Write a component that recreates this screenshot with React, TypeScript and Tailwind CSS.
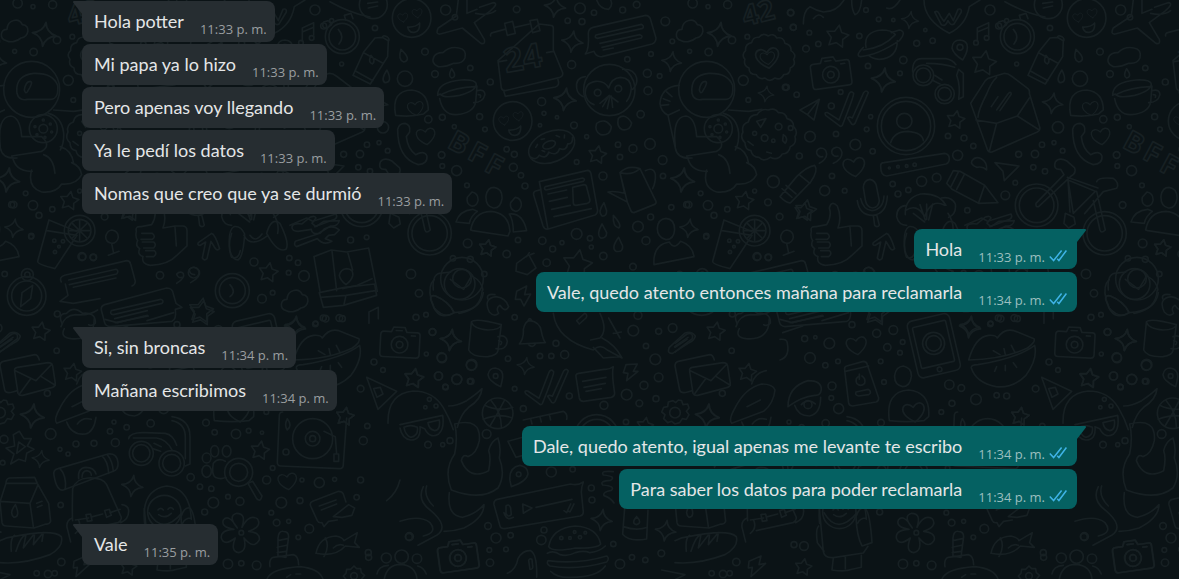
import { clsx } from 'clsx'

type Message = { text: string; time: string }
type Group = { from: 'them' | 'me'; messages: Message[] }

const GROUPS: Group[] = [
  {
    from: 'them',
    messages: [
      { text: 'Hola potter', time: '11:33 p. m.' },
      { text: 'Mi papa ya lo hizo', time: '11:33 p. m.' },
      { text: 'Pero apenas voy llegando', time: '11:33 p. m.' },
      { text: 'Ya le pedí los datos', time: '11:33 p. m.' },
      { text: 'Nomas que creo que ya se durmió', time: '11:33 p. m.' },
    ],
  },
  {
    from: 'me',
    messages: [
      { text: 'Hola', time: '11:33 p. m.' },
      { text: 'Vale, quedo atento entonces mañana para reclamarla', time: '11:34 p. m.' },
    ],
  },
  {
    from: 'them',
    messages: [
      { text: 'Si, sin broncas', time: '11:34 p. m.' },
      { text: 'Mañana escribimos', time: '11:34 p. m.' },
    ],
  },
  {
    from: 'me',
    messages: [
      { text: 'Dale, quedo atento, igual apenas me levante te escribo', time: '11:34 p. m.' },
      { text: 'Para saber los datos para poder reclamarla', time: '11:34 p. m.' },
    ],
  },
  { from: 'them', messages: [{ text: 'Vale', time: '11:35 p. m.' }] },
]

export default function App() {
  return (
    <main className="relative min-h-screen overflow-hidden bg-[#0b1316] font-['Open_Sans','Noto_Sans',sans-serif]">
      <Wallpaper />
      <div className="relative flex flex-col gap-[15px] pt-px pr-[102px] pb-3 pl-[82px]">
        {GROUPS.map((group, i) => (
          <ul key={i} className={clsx('flex flex-col', group.from === 'me' ? 'items-end gap-[3px]' : 'items-start gap-0.5')}>
            {group.messages.map((m, j) => (
              <Bubble key={j} message={m} mine={group.from === 'me'} first={j === 0} />
            ))}
          </ul>
        ))}
      </div>
    </main>
  )
}

function Bubble({ message, mine, first }: { message: Message; mine: boolean; first: boolean }) {
  return (
    <li
      className={clsx(
        'relative flex rounded-lg pt-2',
        mine ? 'bg-[#056162] pr-2.5 pb-2 pl-[11px]' : 'bg-[#262d31] pr-2 pb-[9px] pl-3',
        first && (mine ? 'rounded-tr-none' : 'rounded-tl-none'),
      )}
    >
      {first && <Tail mine={mine} />}
      <span className="font-['Lato','Open_Sans',sans-serif] text-[18px] leading-6 text-[#e4e6e7]">{message.text}</span>
      <span className={clsx('ml-4 flex items-center self-end text-[13px] leading-4 whitespace-nowrap', mine ? 'text-[#9bbfbf]' : 'text-[#9a9ea0]')}>
        <time className="relative top-1">{message.time}</time>
        {mine && <Ticks />}
      </span>
    </li>
  )
}

function Tail({ mine }: { mine: boolean }) {
  return mine ? (
    <svg className="absolute top-0 left-full" width="9" height="14" viewBox="0 0 9 14" aria-hidden="true">
      <path d="M0 0h8q1.6.4.7 1.8L0 13z" fill="#056162" />
    </svg>
  ) : (
    <svg className="absolute top-0 right-full" width="9" height="14" viewBox="0 0 9 14" aria-hidden="true">
      <path d="M9 0H1Q-.6.4.3 1.8L9 13z" fill="#262d31" />
    </svg>
  )
}

function Ticks() {
  return (
    <svg className="relative top-[3px] ml-1" width="18" height="14" viewBox="0 0 18 14" fill="none" stroke="#3fb3e6" strokeWidth="1.5" role="img" aria-label="Leído">
      <path d="M.8 7.5 4.6 11.5 12.6 1.5M8.2 9.8l1.7 1.7L17.4 1.5" />
    </svg>
  )
}

/* ---------- wallpaper ---------- */

type Point = [number, number]
type Round = [number, number, number]

function Stars({ at }: { at: Round[] }) {
  return at.map(([x, y, r], i) => {
    const pts = Array.from({ length: 10 }, (_, k) => {
      const a = (k * Math.PI) / 5 - 1.4
      const d = k % 2 ? r * 0.52 : r
      return `${(x + Math.cos(a) * d).toFixed(1)},${(y + Math.sin(a) * d).toFixed(1)}`
    })
    return <polygon key={i} points={pts.join(' ')} />
  })
}

function Sparkles({ at }: { at: Round[] }) {
  return at.map(([x, y, r], i) => (
    <path key={i} transform={`translate(${x} ${y}) rotate(8) scale(${r / 30})`} d="M0-30Q4-6 30 0 4 6 0 30-4 6-30 0-4-6 0-30z" />
  ))
}

function Dots({ at }: { at: Round[] }) {
  return at.map(([x, y, r], i) => <circle key={i} cx={x} cy={y} r={r} />)
}

function Hearts({ at }: { at: Round[] }) {
  return at.map(([x, y, r], i) => (
    <path key={i} transform={`translate(${x} ${y}) rotate(-8) scale(${r / 30})`} d="M0 28C-60-8-22-46 0-16 22-46 60-8 0 28z" />
  ))
}

function Clouds({ at }: { at: Point[] }) {
  return at.map(([x, y], i) => (
    <path key={i} transform={`translate(${x} ${y})`} d="M-24 28c-22-6-18-34 2-34 2-30 36-36 46-14 26 2 20 36-4 40-14 12-32 14-44 8z" />
  ))
}

function Camera({ x, y, r = 0 }: { x: number; y: number; r?: number }) {
  return (
    <g transform={`translate(${x} ${y}) rotate(${r})`}>
      <path d="M-48-34h22l6-14h34l6 14h32q8 0 8 8v58q0 10-10 10h-98q-10 0-10-10v-56q0-10 10-10zM-12-38h18M34-24h12" />
      <circle cx="0" cy="4" r="25" />
      <circle cx="0" cy="4" r="10" />
    </g>
  )
}

function HeartFace({ x, y }: { x: number; y: number }) {
  return (
    <g>
      <circle cx={x} cy={y} r="58" />
      <Hearts at={[[x - 26, y - 1, 14], [x + 17, y - 14, 14]]} />
      <path d={`M${x - 12} ${y + 27}q22 2 36-12 2 26-16 28-16 2-20-16z`} />
    </g>
  )
}

function Checks({ x, y }: { x: number; y: number }) {
  return (
    <path
      transform={`translate(${x} ${y})`}
      d="M2 76q-6-10 6-8l34 22L72 12q6-12 14-2 2 6-34 96-4 6-10 0zM68 84q4-6 14 0l34-76q8-10 14 0l-40 92q-4 6-10 2z"
    />
  )
}

// One tile of the pattern. Shapes are drawn on a canvas three times finer than
// the page, split in the blocks that make up the tile.
function Tile() {
  return (
    <g id="tile">
      <g transform="translate(400 0) scale(.3333)">
        {/* calendar */}
        <path d="M272 108q-2-8 6-10l36-10M344 82l44-10M418 72l34 4q8 0 8 8l0 66 28 68q2 10-8 14l-164 40q-10 0-12-8l-10-82zM314 70l24-6 8 36-24 6zM390 62l22-4 8 34-22 6zM298 185l22-4M440 158l20-4M312 275l4 14 150-28q14-4 8-22" />
        <text x="318" y="218" fontSize="100" transform="rotate(-10 318 218)" fontWeight="700">24</text>
        {/* speech card */}
        <path d="M565 100q0-14 14-18l158-36q10 0 14 10l17 58q0 14-12 18L606 170q-18 2-24-16l-26 8q12-14 9-62zM588 105l136-32q10 6 4 12l-136 30q-10-2-4-10zM600 130l120-26q10 4 4 10l-118 28M610 150l30-6" />
        <text x="1035" y="78" fontSize="84" transform="rotate(-14 1035 78)" fontWeight="700">42</text>
        {/* seal */}
        <path d="M1105 108q16-10 26 6 20-4 24 16 20 4 18 22 18 12 8 26 8 18-10 26 0 20-20 20-8 18-26 10-16 14-30 0-18 6-26-10-22 0-22-20-18-8-12-26-12-14 2-26-2-20 18-24 4-18 22-16 12-16 28-4z" />
        <Hearts at={[[1103, 175, 20], [1103, 175, 32]]} />
        {/* monkey */}
        <circle cx="628" cy="270" r="77" />
        <path d="M556 230q-30 4-26 34 2 18 20 26M668 208q34-2 42 26 4 18-12 34M556 282q-2-34 32-38 26-2 38 20 8-30 36-32 30 2 32 32-2 26-14 40M556 282q4 26 26 32M600 310l28-24 26 20M608 320l16-28M622 326l8-38M638 322l-4-34M590 370q26-18 44 10-2 28-32 24-20-10-12-34zM655 355q20-18 40 14-4 24-28 20-18-8-12-34z" />
        <Dots at={[[593, 278, 10], [655, 266, 10]]} />
        <HeartFace x={338} y={363} />
        {/* donut */}
        <g transform="rotate(-22 455 440)">
          <ellipse cx="455" cy="440" rx="72" ry="46" />
          <ellipse cx="450" cy="432" rx="20" ry="11" />
          <path d="M385 446q12 16 26 4 14 20 30 2 18 22 34 2 16 16 28-4 14 8 20-12M410 424l8-6M434 408l10 2M480 414l8 8M500 430l4-8M424 440l6 6" />
        </g>
        {/* newspaper */}
        <path d="M418 545l145-34q8 0 10 10l20 110q0 10-8 14l-140 42q-12 2-16-10l-28-92q-2-10 6-12l16-4zM418 545l26 142M436 560l112-26q10 4 2 10l-112 26q-8-4-2-10zM444 582l56-12M448 604l54-12M455 628l56-12M462 650l112-24M518 562l34-8q8 0 8 8l10 38q0 8-8 10l-34 6q-8 0-8-8z" />
        {/* watering can */}
        <path d="M660 518q22-24 60-12l48 98q2 8-6 10l-60 24q-8 0-10-8l-10-24-58-30q18-4 50 4zM660 518l22 88M660 518q34 10 60-12M736 512q24-12 30 10 2 24-8 44" />
        {/* astronaut */}
        <circle cx="920" cy="268" r="84" />
        <path d="M876 280q-6-54 50-60 58-2 72 36 4 40-20 42h-70q-26 6-32-18zM898 270q4-26 18-26 10 2-8 30-6 10-10-4zM838 256q-54 4-58 54 2 24 24 36l34-16M790 296l20 8M784 316l22-2M800 276l16 14M804 346l22 98q6 34 50 30M826 440q-10-90 32-92 28 4 32 62h60q30 26 0 44l-90 14M862 468q8 48 60 46M920 510q-14 52 30 66 44 4 60-24 44 4 60-28-4-26-30-36M986 330l60 4 40-6M970 340q40 10 46 58 2 30-10 52M956 464q30 10 34 56M1006 440q34 10 40 50" />
        <circle cx="955" cy="386" r="42" />
        <circle cx="955" cy="386" r="13" />
        <Dots at={[[955, 360, 3], [976, 372, 3], [980, 396, 3], [960, 412, 3], [936, 404, 3], [930, 380, 3]]} />
        {/* cookie */}
        <path d="M1105 330q20-8 30 8 22-2 26 18 20 4 20 24 14 14 4 30 6 22-14 30-4 22-24 22-14 22-36 10-20 16-34 0-20 0-24-20-18-4-18-24-16-14-6-32-6-22 16-30 4-22 26-22 14-20 34-14zM1070 364l28-8-16 26zM1044 424l16 12M1100 456l14 4M1150 404q16 10 6 26l-8-8z" />
        <Dots at={[[1136, 380, 10], [1094, 414, 10], [1120, 422, 5], [1064, 400, 6], [1172, 384, 7]]} />
        {/* drops */}
        <path d="M612 608q-20 28-6 40 14 2 14-16zM640 646q-2 34 16 38 12-8-16-38zM606 672q-18 32-4 42 18 2 18-16zM656 712q-24 32-8 42 22 4 20-16z" />
        {/* drink with lemon slice */}
        <path d="M972 660l82 34M972 660l-34 124q0 10 52 22l66-100-90-14" />
        <circle cx="1064" cy="692" r="46" />
        <circle cx="1064" cy="692" r="34" />
        <path d="M1064 660v64M1034 692h62M1042 670l44 44M1086 670l-44 44" />
        <Dots at={[[988, 722, 5], [1014, 724, 5], [1002, 740, 4], [990, 756, 5]]} />
        {/* people */}
        <path d="M798 655q26 2 26 34-2 30-26 30-26-6-26-34 2-28 26-30zM762 794q-4-60 46-68 14 26 34-2 36 12 40 46zM282 562q26 4 24 34-4 30-26 28-24-6-22-36 4-26 24-26zM212 690q10-54 60-56 54 4 58 60l-6 14-106-16zM216 576q20 4 18 26-4 18-20 16-16-6-12-26zM346 592q18 2 18 24-4 18-18 18-18-6-14-26zM168 666q10-34 50-38l14 6q-20 14-24 36zM328 642q40-4 52 50l-40 4q0-36-12-54zM350 790l36-26 22 40-26 20-34-10zM380 770l8-12M392 764l10-4" />
        <Stars at={[[592, 465, 28], [1033, 603, 29], [262, 745, 26], [532, 795, 46]]} />
        <Sparkles at={[[465, 20, 32], [517, 125, 32], [495, 298, 34], [815, 185, 30], [958, 103, 36], [1098, 282, 24], [848, 540, 36], [867, 685, 28]]} />
        <Clouds at={[[868, 94]]} />
        <path d="M590 0q10 28 36 28 14-12 6-28" />
        <Dots at={[
          [350, 28, 10], [540, 25, 16], [582, 38, 8], [503, 62, 8], [546, 65, 9], [668, 30, 9], [710, 14, 10], [796, 64, 13], [878, 10, 14], [924, 20, 6], [983, 14, 12],
          [996, 120, 11], [1042, 110, 7], [926, 156, 11], [869, 154, 6], [817, 124, 7], [682, 178, 8], [753, 162, 7], [515, 194, 12], [742, 220, 12], [779, 228, 7], [744, 272, 12],
          [425, 305, 12], [432, 340, 6], [471, 352, 5], [722, 343, 11], [522, 376, 10], [420, 376, 5], [560, 410, 6], [654, 434, 8], [699, 446, 12], [750, 432, 16], [660, 471, 8],
          [530, 486, 7], [609, 528, 12], [788, 480, 13], [789, 528, 8], [814, 622, 8], [866, 614, 10], [924, 616, 14], [982, 628, 8], [942, 646, 9], [902, 580, 7], [752, 651, 9],
          [714, 680, 16], [530, 702, 16], [570, 715, 8], [574, 741, 6], [738, 722, 12], [486, 728, 6], [458, 747, 9], [427, 722, 11], [918, 710, 7], [610, 768, 11], [699, 800, 10],
          [440, 788, 11], [354, 720, 8], [320, 762, 11], [1030, 241, 15], [1045, 300, 7], [1159, 262, 9], [1120, 545, 18], [1104, 607, 10], [1064, 573, 6], [1180, 82, 9], [1172, 38, 10],
          [1139, 650, 10], [1072, 770, 10], [1105, 772, 9], [320, 448, 8], [343, 463, 9], [340, 502, 12], [363, 526, 8], [375, 558, 9], [1140, 88, 5],
        ]} />
      </g>

      <g transform="translate(105 0) scale(.3333)">
        <path d="M70 72q0-40 20-52 20 12 40 16 40 0 62-36M100 56q16-20 30-4M215 0q0 30 10 44 16-4 20-44M320 24q20 8 40-24M432 0q0 60 76 100 50-24 60-80L600 0" />
        <path d="M464 36q10-8 18 14l10 14 16-24 12 22 14-34q12-4 10 8l-22 36q-10 6-18-10-8 20-20 12z" />
        {/* saturn */}
        <path d="M258 142q-8-48 48-52 28 0 40 14M352 122q0 52-54 56-22-2-32-12M250 142q-26 26-8 28 50-4 116-48 24-28 0-32l-24 8M250 150q60-6 96-46" />
        {/* music, pin */}
        <path d="M592 124V84l34-16v42M592 96l34-14M540 120q24 2 22 24 0 14-14 36-28-18-32-36 2-24 24-24zM675 5q60 34 120 46" />
        <Dots at={[[588, 128, 7], [620, 114, 7], [540, 142, 9]]} />
        {/* stopwatch */}
        <circle cx="712" cy="110" r="51" />
        <circle cx="712" cy="110" r="40" />
        <path d="M700 88q20 22 2 44M722 60l-4-14 20-6 6 16M656 66l14-4 10 12-16 12q-16-4-8-20z" />
        <circle cx="805" cy="14" r="42" />
        <path d="M788 10l30-4M790 24l28-6" />
        {/* bottle */}
        <path d="M832 112l18 10-2 48-52 82-52-26 32-70 34-42zM776 158l58 32M750 212l54 30M798 166q16 18 4 26-14-4-4-26zM832 112q2-8 14-2 10 8 4 14" />
        <HeartFace x={920} y={54} />
        {/* plane */}
        <path d="M1060 0l-6 48-54 36q-10 20 6 18l66-18 56 46q14 4 10-12l-30-50 46-34q30-24 10-26l-40 14M1086 0v40l30-12M1112 40q40 8 60-8" />
        <Camera x={152} y={220} r={-8} />
        {/* glasses */}
        <path d="M398 216q-2-42 30-40h70q20 4 30 18M440 190q50 0 84 12M536 208l14 12v70l-14 8q6-40-6-72zM456 240l24 12M464 226l22 14" />
        <circle cx="430" cy="226" r="31" />
        <circle cx="430" cy="226" r="22" />
        <circle cx="494" cy="282" r="29" />
        <circle cx="494" cy="282" r="20" />
        <path d="M60 330l58-32-16 62-20-16zM82 344l36-46" />
        <Checks x={135} y={270} />
        {/* contact */}
        <circle cx="378" cy="378" r="86" />
        <circle cx="378" cy="378" r="74" />
        <circle cx="373" cy="363" r="23" />
        <path d="M332 428q10-34 52-34 44 4 46 28" />
        {/* open letter */}
        <path d="M572 310l44-68q6-8 18-10l40-12q10 0 20 8l50 38q6 6 4 14l32 104q0 8-8 12l-136 60q-10 2-14-8zM588 360l62 10 62-22 36-54M650 370l-22 84M712 348l66 42M594 352q0-20 26-70 14-36 30-50M634 320l20-30M650 330l34-48q8-10 10 0l-34 50" />
        {/* person with heart */}
        <circle cx="900" cy="236" r="23" />
        <path d="M872 346q-14-74 48-76 50 6 50 60l-14 12q-40 10-84 4z" />
        <Hearts at={[[932, 326, 22], [963, 410, 26], [223, 502, 30]]} />
        {/* coffee cup */}
        <path d="M998 286q0-40 70-46 44-2 46 12 0 20-50 34-50 10-58-4zM1004 296q10 50 50 48 50-4 58-36l4-50M1116 272q24-6 24 12-6 24-34 24M1120 284q10 0 6 8M1012 282q40-20 98-22" />
        <path d="M878 388q4-18 22-18 18 4 14 26l-10 14q4 36 28 54 26-14 34 4 2 24-26 26-62-18-62-106z" />
        <g fontSize="84" fontWeight="700">
          <text x="1024" y="440" transform="rotate(28 1024 440)">B</text>
          <text x="1084" y="474" transform="rotate(28 1084 474)">F</text>
          <text x="1134" y="510" transform="rotate(28 1134 510)">F</text>
        </g>
        {/* quotes */}
        <path d="M118 490q22-12 22-28-2-18-18-18-14 4-12 16 6 14 18 10M160 490q26-12 26-32-4-18-18-16-16 4-12 18 6 12 18 8M576 482q10-14 28-6 18 10 16 34-12-12-30-8-20-8-14-20z" />
        <path d="M302 498q0-10 10-10l182-28q14 2 14 16 0 12-10 16L320 528q-18 0-18-30z" />
        <Dots at={[[328, 504, 3], [354, 500, 4], [380, 498, 4], [404, 494, 5]]} />
        <path d="M645 488l72 10-44 44-4-28z" />
        {/* crayons */}
        <path d="M500 550l20-38 20 2 74 42 40 52-58 2-80-42zM536 514l-24 48M554 522l-24 46M614 556l-18 52M104 496q12 16-12 50l-60 62q-10 4-32-18l50-60q30-30 54-34zM60 526l30 24M6 566l30 26M18 556l30 26" />
        {/* bicycle */}
        <circle cx="770" cy="616" r="64" />
        <circle cx="770" cy="616" r="52" />
        <circle cx="974" cy="700" r="65" />
        <circle cx="974" cy="700" r="53" />
        <path d="M768 610l84-86-10-16q-24 2-16-22 12-16 36-2l22 20q6 14-10 24l-98 92q-10 2-8-10zM864 540l82 34-66 66zM864 540l6 96M950 574l26 116q-12 12-16 0l-20-88M950 545q4-14 50-10 20 14 10 30l-40 10-56 66M856 640l26 12 4 20-20 12-14-14zM862 532l92 32" />
        {/* microphone */}
        <path d="M250 562q2-22 20-24 18 4 20 24l8 40q-2 20-20 22-18-2-22-24zM232 602q6 44 46 44 42-4 44-58M242 596q8 34 34 36 34-4 36-44M280 646l4 30q8 8 14 0l-8-32" />
        {/* second monkey */}
        <path d="M376 644q-2-50 46-62 54-4 76 34M380 616q-30 2-30 34 6 26 30 26M484 594q30-6 42 18 4 30-20 40M376 632q34-24 58 18 20-56 60-34M420 614l16 46M440 612v46M458 612l-12 48M400 640l34 26M380 700q-14 40 0 72 20 8 26-20M504 640q20 30 14 60" />
        {/* thumb up */}
        <path d="M94 694q-4-16 14-14l32-6q16-26 8-50 6-24 24-6 14 34 2 66l36-6h22q14 0 14 14v46l-28 26q-30 32-82 32-28-4-22-26-18-6-10-24-14-8-6-24-8-10-4-28zM210 682l4 56M110 700h32q12 10 0 18h-34M112 726h34q10 8 0 18h-30M122 752h26q10 8-2 18h-22" />
        <path d="M280 728l40-28q10 2 24 46-8 8-14-2l-12-20-12 52q-8 8-14-2l10-48-16 10q-10 0-6-8zM555 676l50-22 18 10 70-22q6 10-4 16l-60 22" />
        <path d="M20 690q20 2 20 22-4 18-20 18-18-4-18-20 4-18 18-20zM20 730l6 30M10 766l32-12" />
        {/* dog */}
        <circle cx="1064" cy="852" r="46" />
        <path d="M985 870q-4-44 18-50l34-4M1036 838l40 30 24-40M1104 830q26 14 30 40" />
        <Stars at={[[172, 110, 35], [612, 190, 38], [527, 360, 28], [77, 632, 33], [1147, 745, 26]]} />
        <Sparkles at={[[390, 60, 26], [310, 240, 36], [818, 310, 31]]} />
        <path d="M1000 200q-24-10-12-32 10-12 26-10 20-20 48-14 24 4 18 30-8 18-34 16-24 12-46 10z" />
        <path d="M888 148q-10 32 8 38 26-6-8-38zM846 210q-20 30-6 38 24 0 6-38zM1040 206q-12 22 0 28 18-4 0-28z" />
        <Dots at={[
          [32, 38, 9], [78, 146, 10], [115, 132, 8], [238, 108, 8], [88, 98, 7], [40, 82, 9], [16, 262, 9], [50, 284, 8], [258, 30, 7], [296, 58, 7], [340, 60, 5], [410, 130, 9],
          [458, 122, 8], [436, 90, 5], [630, 30, 15], [680, 62, 6], [370, 180, 11], [360, 220, 7], [264, 198, 8], [710, 192, 6], [656, 78, 9], [182, 276, 7], [154, 318, 9], [272, 350, 6],
          [260, 388, 7], [168, 402, 8], [90, 410, 16], [226, 434, 16], [278, 454, 8], [58, 468, 9], [552, 414, 9], [504, 408, 8], [580, 438, 8], [834, 382, 17], [786, 434, 8], [716, 463, 9],
          [765, 462, 11], [822, 428, 6], [848, 452, 7], [533, 466, 15], [760, 502, 8], [795, 514, 8], [706, 548, 7], [676, 586, 13], [470, 533, 13], [425, 544, 15], [385, 570, 8], [354, 582, 9],
          [338, 552, 8], [134, 572, 15], [194, 572, 7], [156, 528, 8], [562, 631, 8], [1028, 615, 10], [1022, 30, 15], [960, 155, 10], [990, 222, 10], [1096, 204, 8], [1156, 246, 9], [970, 358, 11],
          [1012, 352, 9], [1124, 350, 9], [1140, 388, 7], [1010, 465, 10], [1012, 498, 7], [1055, 512, 15], [1086, 556, 7], [1088, 730, 13], [1044, 775, 8], [1096, 778, 9], [918, 822, 14], [1138, 822, 8],
          [266, 818, 16], [810, 84, 8], [1050, 52, 8], [1048, 380, 6],
        ]} />
      </g>

      <g transform="scale(.3333)">
        {/* monkey feet, tools, map */}
        <path d="M690 752q-8-60 12-72 20-4 32 22-4 70-20 78-18-2-24-28zM800 700q14-50 40-30 30 60 18 78-26 12-58-48zM732 706q20 40 72 0M750 706q16 24 36-4" />
        <path d="M876 682q0-14 30-10l24-20q16-6 18 2l-12 16 12 10 24-16 46-2q-4 18-26 16l-36 22q-20 4-22-12l-40 6q-18 0-18-12zM886 724l74-24 14-14q26-12 44 4l-14 14-18 2-10 10 20 8q-26 14-44-8l-62 24q-10-4-4-16z" />
        <path d="M942 770l52-20 46 6 66-12 26 130M942 770l18 104M996 752l14 120M1044 760l14 50M1040 806q22 2 18 22-4 14-20 26-18-14-20-28 4-18 22-20zM1028 866l44-10 44-20" />
        <path d="M184 846q-8-14 10-20l186-44q10 0 12 10l14 52q0 10-10 14M206 840l142-32q10 4 2 14l-142 32M220 862l128-28M530 850q26-16 20-30-10-8-20 2 4 14 16 10M572 848q32-18 26-36-14-18-30-4 0 16 16 16" />
        <Stars at={[[805, 818, 30], [385, 636, 28]]} />
        <Dots at={[[246, 770, 12], [280, 772, 10], [480, 826, 11], [762, 786, 12], [868, 774, 8], [866, 818, 7], [912, 828, 16], [894, 788, 8], [1052, 720, 9], [1100, 712, 7], [14, 822, 8], [94, 708, 8], [82, 824, 18], [82, 824, 8], [35, 614, 9]]} />
      </g>

      <g transform="translate(0 290) scale(.3333)">
        {/* compass and watch */}
        <circle cx="80" cy="18" r="58" />
        <circle cx="80" cy="18" r="45" />
        <path d="M98-14L92 26 62 50 66 8zM690-16q20 22 0 36" />
        <circle cx="697" cy="2" r="51" />
        <circle cx="697" cy="2" r="39" />
        {/* cards */}
        <path d="M180 34l24-18-8-34M180 34l40 6 80-14M304 60q-2-12 10-16l186-50q18 0 20 18l8 28 18 12-20 6q4 30-10 36L330 110q-14-2-16-12zM334 62l148-34q12 4 4 12l-146 34q-12-2-6-12zM344 86l98-24M352 98l90-22" />
        {/* cake */}
        <path d="M958 8l76-16 90-10 6 34-100 30-60 6zM962 22l76-6 88-14M1038 16l-6 28" />
        {/* letters */}
        <path d="M14 300l-14-72q0-12 10-14l94-20q10 0 14 16M14 300q4 12 24 6l14-4M44 244q-2-10 8-12l92-14q12 0 14 10l8 52q0 10-8 12l-90 24q-10 2-14-6zM46 242l62 30 48-50M60 310l32-44M166 286l-42-26M0 160l36-28q20-6 16 14L0 186M0 172l36-24" />
        {/* cap */}
        <path d="M170 400q-10-12 10-46 30-60 80-72 34 0 40 18-4 40-34 64zM200 396q14 40 56 36 26-6 32-50M232 402q16-22 42-14M216 350l40-20M230 282q10-34 44-40" />
        {/* gear */}
        <path d="M10 330l10 2 4 12 14-2 4 12-8 10 8 10-8 14-12-2-8 12-14 4-10-8-12 4-12-12 4-12-10-8 6-14 12-2 2-14 14-4 8 6z" />
        <circle cx="0" cy="368" r="16" />
        <path d="M40 434l18-10 14 22 22 0-12 22 20 10-22 12-4 24-20-6-24 14 10-30-24-18 26-6zM56 456l20 14-26 20z" />
        {/* glasses */}
        <path d="M386 446q4-20 50-18l60 2q24 4 34 36M400 444h70q30 4 46 36M516 380q54 8 54 60v82l-14 6M516 392q40 8 40 50v64M458 476l24 8M462 460l22 10" />
        <circle cx="424" cy="490" r="36" />
        <circle cx="424" cy="490" r="26" />
        <circle cx="515" cy="520" r="38" />
        <circle cx="515" cy="520" r="27" />
        {/* paw and magnifier */}
        <ellipse cx="620" cy="504" rx="13" ry="15" />
        <ellipse cx="644" cy="484" rx="12" ry="17" />
        <ellipse cx="680" cy="484" rx="13" ry="17" />
        <ellipse cx="620" cy="544" rx="14" ry="18" />
        <path d="M640 520q14-18 36-6M646 562q-12-10-6-42M646 562q16 8 32 0" />
        <circle cx="716" cy="547" r="42" />
        <circle cx="716" cy="547" r="27" />
        <path d="M744 580l14-6 28 44q-4 20-16 8z" />
        {/* turntable */}
        <path d="M848 366q-10 0-10 12l-6 138q0 12 10 12l176 8q12 0 12-12l10-140M862 386q-10 20 0 34 16-14 0-34zM972 424l34 16 4 52M1002 492h14v22h-14z" />
        <circle cx="938" cy="446" r="60" />
        <circle cx="938" cy="446" r="22" />
        <circle cx="938" cy="446" r="9" />
        <circle cx="858" cy="486" r="9" />
        {/* skateboard */}
        <path d="M162 556q-4-16 12-20l150-44q26-4 30 26 2 20-14 26L190 600q-20 4-28-44zM180 536q20 20 16 62M306 498q18 16 20 52M322 494q16 20 18 50M236 566q-4-32 22-34 24 0 30 20M246 562q0-18 14-20 14 2 14 14" />
        {/* milk */}
        <path d="M18 580q0-14 10-16l76-2 8 18 34 60 6 54q-4 10-14 8l-36 12-84-6q-10 0-12-10L0 636zM20 580h90M0 634l90 6 10 70M90 640l24-56M46 644q-20 26-4 38 20-2 4-38zM110 640l16-6M112 652l14-6" />
        {/* bag */}
        <path d="M218 692q-2-20 0-96 10-30 46-32 44-2 56 20l44 98q0 12-10 16l-110 24M216 684q-20 10-14 32l10 40M226 690l40-6M278 680l30-8M330 668l30-10M258 674l14-2 4 20-14 2zM314 662l14-4 6 18-14 6zM366 644q20 2 20 20 0 24-24 34M236 690q10 26-10 40" />
        {/* smiling girl */}
        <circle cx="493" cy="666" r="50" />
        <path d="M434 700q-12-100 66-112 70 6 74 100M474 660q8-10 16 0M504 658q8-10 16 0M476 674q20 14 38-4M548 700q6-16 26-16" />
        {/* flower */}
        <path d="M712 714q-30-36-2-44 30 0 16 42 20-40 46-26 16 24-26 38 36 4 32 26-16 30-46-6 10 40-16 44-26-4-10-44-34 26-42 0-2-24 38-26-40-6-32-28 16-20 42 24z" />
        <circle cx="724" cy="728" r="7" />
        {/* chat card */}
        <path d="M932 648q-4-10 6-14l78-30q10 0 14 8l8 24M932 648l20 44q4 8 14 6l6 12 14-16 26-4M958 648l50-18M964 660l46-18M1000 680l46-36 18 10-8 22-30 6z" />
        {/* cane, fish, ufo */}
        <path d="M834 744q2-22 16-20 16 0 16 16l-8 62-24-4zM834 752l28-6M832 772l28-6M832 788l26-4M810 830q-4-22 10-28l60-8q16 4 16 30M948 790q10-50 60-52 20 4 24 14l40-24-8 30 14 14-42-4q-30 34-88 22zM976 744q14 26-4 56M1000 774q14-14 30-8M800 870q10-34 100-40 60 6 70 40M860 862l12-8M888 852h14" />
        <path d="M0 752q20-10 40-12 120-24 144 0 8 30-34 54-80 30-150 24M34 784q-4-40 10-48M48 784q14-46 30-50l-8 40 34-44-4 34 30-36-4 26M222 814l36-16-6 26 20-4-44 40 4-28-12 2z" />
        <path d="M1062 828l8 8h12l2 12 10 8-8 10M1062 828l-10 10-12 0-2 12-8 8 8 10" />
        <circle cx="1062" cy="858" r="10" />
        <Stars at={[[603, 62, 38], [122, 125, 29], [217, 248, 28], [780, 482, 29], [1035, 380, 28], [385, 832, 26]]} />
        <Sparkles at={[[885, 108, 30], [97, 378, 36], [122, 507, 26], [397, 588, 32]]} />
        <Clouds at={[[883, 34]]} />
        <Hearts at={[[863, 575, 26]]} />
        <path d="M186 100q-14-30 14-30 20-24 48 0 40-4 38 30-8 10-20 4" />
        <Dots at={[
          [172, 72, 9], [170, 182, 8], [786, 26, 13], [818, 8, 7], [946, 102, 8], [970, 84, 9], [1018, 84, 10], [152, 432, 16], [142, 310, 9], [346, 458, 12], [282, 460, 9], [228, 462, 9], [180, 478, 6],
          [204, 492, 6], [452, 400, 11], [380, 412, 8], [330, 424, 8], [342, 396, 6], [618, 398, 10], [644, 427, 8], [708, 432, 14], [746, 422, 7], [786, 428, 5], [12, 448, 12], [8, 518, 7],
          [572, 562, 11], [600, 590, 8], [634, 596, 8], [640, 638, 16], [614, 666, 9], [684, 620, 7], [720, 634, 12], [800, 570, 12], [818, 534, 7], [844, 638, 16], [900, 632, 9], [958, 578, 15],
          [906, 570, 6], [1004, 568, 6], [1082, 570, 9], [1070, 622, 8], [814, 668, 7], [830, 698, 10], [866, 694, 6], [928, 716, 13], [895, 742, 7], [182, 645, 8], [184, 816, 11], [684, 822, 14], [724, 820, 8],
          [770, 826, 13], [1090, 452, 12], [1102, 408, 8], [1122, 216, 9], [1082, 296, 10], [144, 852, 11], [110, 850, 8], [164, 850, 8], [1106, 802, 9],
        ]} />
      </g>

      <g transform="translate(105 290) scale(.3333)">
        {/* phone */}
        <g transform="rotate(-13 462 165)">
          <rect x="396" y="80" width="130" height="174" rx="16" />
          <rect x="410" y="100" width="102" height="126" rx="4" />
          <circle cx="462" cy="160" r="33" />
          <circle cx="462" cy="160" r="23" />
          <circle cx="462" cy="240" r="7" />
        </g>
        {/* lips */}
        <path d="M566 210q20-70 60-74 20-2 26 8 20-30 50-22l60 24q6 10-20 28-70 34-176 36zM574 234q-2-10 20-10 120-20 170-58 10 40-26 90-40 40-90 34-60-12-74-56zM640 182l20 12M672 176l4 18M694 166l10 20M650 230l-6 14M676 226v16M700 218l10 14" />
        <Camera x={884} y={160} r={3} />
        <path d="M785 262l90 42-56 54zM806 296l20-4 8 20-18 10zM792 100V66l28-14v34M370 228q26 6 24 32-4 30-26 30-26-6-24-34 4-26 26-28zM328 392q-12-88 58-92 66 6 60 80l-14 12q-50 6-104 0z" />
        <Hearts at={[[402, 368, 30], [230, 168, 28]]} />
        {/* coffee bag */}
        <path d="M194 240q-2-10 6-12l50-14q10 0 12 10l34 100q0 10-8 12l-70 12q-10 0-12-8zM196 244l70-16M238 258q-14 6-8 22 12 12 24 0 4-14-8-22M238 252v16M228 306l36-8q14 8 2 16l-30 4q-12-2-8-12" />
        {/* bell and lamp */}
        <path d="M0 210q30-10 22-50 0-14-22-12M24 350q0-60 60-78 40 0 40 26-2 20-20 18-40 4-80 34zM44 346q10 32 44 32 34-6 34-56M64 344q20-22 42-2" />
        <circle cx="84" cy="344" r="12" />
        <path d="M0 88l36 10 60-14M8 128l60-20M30 98l100-20M206 68l-80 24" />
        {/* robot */}
        <path d="M118 655l12 130q4 20 30 18l90-14 14-20M228 680q10-30 26-26 16 10 22 104l-30 10q-16-30-18-88zM132 668q40 70 100 0M116 708q-10 10-4 50l20 26M160 804l-4 36q40 6 60-2l28-6v-36M196 800v36" />
        {/* people */}
        <circle cx="890" cy="800" r="20" />
        <circle cx="844" cy="804" r="15" />
        <circle cx="936" cy="806" r="14" />
        <path d="M838 867q8-44 50-44 44 4 48 44M816 852q4-24 34-26M964 852q-8-20-26-24" />
        <Camera x={1058} y={800} r={-8} />
        <path d="M978 28q-2-14 14-10 40 16 56 50-30 20-60-14zM978 28q-10-40 10-60M1132 0q-4 60-70 70M1150 30q-10-20 20-16" />
        <Stars at={[[926, 266, 30], [720, 380, 28], [290, 70, 38]]} />
        <Sparkles at={[[570, 112, 32], [1037, 150, 32]]} />
        <Dots at={[
          [340, 120, 13], [368, 156, 7], [322, 172, 11], [290, 130, 12], [216, 104, 9], [148, 160, 16], [90, 204, 16], [136, 226, 8], [174, 214, 7], [302, 214, 7], [360, 188, 7], [312, 276, 7],
          [156, 288, 12], [154, 324, 7], [176, 356, 15], [508, 284, 14], [544, 294, 10], [588, 328, 16], [650, 316, 8], [680, 318, 9], [516, 340, 9], [484, 366, 7], [662, 86, 10], [632, 100, 7],
          [712, 86, 9], [982, 126, 10], [1010, 202, 14], [1100, 224, 16], [964, 192, 6], [1000, 258, 12], [1056, 268, 15], [1098, 274, 9], [1022, 292, 8], [834, 240, 7], [74, 146, 9], [106, 142, 5],
          [942, 10, 11], [912, 740, 10], [790, 788, 9], [72, 768, 13], [42, 764, 9],
        ]} />
      </g>

      <g transform="translate(400 290) scale(.3333)">
        {/* mug and bells */}
        <path d="M214 96q10-14 90 8-4 16-40 16-44-4-50-24zM214 98l-8 82q10 22 58 20 28-4 30-18l10-78M294 140q24-8 28 14-4 28-34 22M296 152q14 2 6 12M358 162q14-16 12-44 6-26 20-26 30 4 34 32 4 22 12 34zM384 92q4-12 12 0M386 164q12 12 22-4" />
        <path d="M460 70q10 80 120 110 20-20 42 0l44 24q-20-40-60-60M600 70q24 50 0 74l-28 6M530 92l24-22q10 4 4 14l-20 18zM626 84l34 60M640 130l24-4M580 172l30 32 50-4" />
        <circle cx="186" cy="-34" r="64" />
        <circle cx="186" cy="-34" r="28" />
        <path d="M92 28q-2-14 14-10 40 16 56 50-40 24-60-14zM162 68q80-4 88-60M268 66q-20-40 20-46 30 4 38 30-10 20-26-4-14 8-4 24-14 12-28-4zM350 4l30-16-6 26 18-2-20 36-10-20-16 0z" />
        <path d="M808 172l46-42q20-8 32 8-2 12-18 20l-50 32q-18 2-10-18zM824 170l40-28M1008 110q10-34 44-36 40 4 66-14M1018 116q-14 26 20 30 70 6 70-60" />
        <path d="M286 234q24 4 22 28-2 14-6 28-36-16-38-36 4-20 22-20z" />
        <circle cx="287" cy="258" r="7" />
        <Checks x={375} y={235} />
        {/* note */}
        <path d="M528 260q-2-8 8-10l76-12q14 2 28-8-4 14 0 50l4 30q0 10-10 12l-84 12q-10 0-12-10zM548 274l70-12M552 292l64-12M558 304l46-8M678 224l34-2-12 22 14 0-34 28 4-22-14-2z" />
        {/* basketball */}
        <circle cx="293" cy="370" r="46" />
        <path d="M254 346q40 20 84 6M250 388q50-20 86-4M272 330q34 40 32 84M314 330q-20 40-44 78" />
        {/* octopus */}
        <path d="M-36 400q-2-90 76-97 60 0 90 50 20 34 30 66M146 348q24 0 54-16 30-20 46-36-2 32-40 56-24 20-34 60M0 404l128-28q6 40-12 56-26 16-42-16l-14-6q4 40-28 40-26-4-32-36M12 412q20-10 40 0 4 26-20 30-16-6-20-30zM84 398l34-8q4 30-14 32-18-4-20-24M164 402q80-20 74 50-8 40-34 48-16-10-20 12 24 60 82 30 8-40 0-60 8-30 28-38 10 30 4 60 20 50-4 90-50 40-140 6-24-60 10-108 10-50 0-90zM148 608q-8 70 40 74 40-10 64-38 0 40-60 70-30 10-60 10M0 570q-10 40-40 62M70 590q-20 40 20 70 60 50 20 76l-56 30M0 694q60-20 90 4 24 30-20 40M80 588q-10 30 20 60" />
        <Dots at={[[88, 328, 6], [76, 352, 5], [108, 348, 6]]} />
        <path d="M370 390l120-26q14 8 10 24M392 386l4 16M420 380l4 16M448 374l4 16M324 454l44-12M324 454l24 48 30-8M330 572q-4-40 30-46 24 4 24 26-4 24-50 38z" />
        <circle cx="590" cy="440" r="66" />
        <circle cx="590" cy="440" r="52" />
        <circle cx="356" cy="553" r="7" />
        {/* voice note */}
        <path d="M282 644q-2-12 10-16l220-46q20 6 38-6-6 16-6 30l6 60q0 10-10 12L314 716q-12 0-14-8zM368 642l28 12-26 16zM408 652l108-24M318 648q10-8 14 6l2 20q-10 10-16-4zM312 668q8 26 28 14M492 662l8 6 12-26M506 664l4 2 12-24" />
        {/* burger */}
        <path d="M446 770q10-56 80-62 66 4 76 54-10 14-76 12-70 14-80-4zM442 790q20-10 38 4 24 6 46-6 26-8 44 0 30-4 46-20M444 812q90 12 176-14 10 8 0 18-90 26-170 12-12-6-6-16zM452 844q20 20 60 18 80 0 104-34" />
        <Dots at={[[484, 744, 5], [510, 744, 4], [540, 742, 5], [556, 728, 4], [524, 726, 4]]} />
        <Camera x={174} y={800} r={-8} />
        <path d="M322 850q26-10 32-44 14-26 38-24 20 10 18 80M386 812l4 26q10 0 8-10l-2-20q-8-4-10 4M674 655l-6 78q20 24 72 14l4-86M670 710q40 14 72 2M710 680q-18 20 0 24 18-6 0-24M785 840l70 14-40 20M640 545q-40-4-30 10 40 4 22 16-34 2-24 14 40 4 26 16-26 4-22 16 20 6 30 22" />
        <Stars at={[[42, 265, 30], [735, 408, 26]]} />
        <Sparkles at={[[153, 150, 32], [377, 228, 26], [605, 690, 32], [797, 722, 31]]} />
        <Dots at={[
          [98, 126, 10], [48, 82, 9], [78, 74, 7], [126, 204, 14], [214, 226, 15], [116, 258, 12], [170, 268, 15], [210, 274, 8], [136, 290, 8], [344, 82, 8], [324, 206, 8], [420, 198, 8], [454, 198, 8],
          [494, 194, 12], [468, 160, 9], [344, 296, 7], [370, 356, 9], [700, 122, 16], [714, 76, 12], [776, 124, 9], [818, 114, 13], [738, 168, 8], [766, 208, 16], [776, 262, 13], [732, 286, 12],
          [680, 314, 16], [718, 340, 10], [768, 326, 9], [612, 346, 12], [508, 318, 9], [678, 396, 8], [260, 432, 13], [150, 452, 9], [128, 464, 6], [84, 464, 10], [454, 546, 15], [518, 538, 8],
          [574, 594, 9], [576, 630, 9], [264, 708, 10], [288, 744, 15], [332, 736, 8], [268, 780, 7], [318, 778, 7], [424, 750, 14], [432, 720, 9], [28, 740, 12], [270, 818, 11], [640, 762, 8],
          [660, 822, 14], [696, 802, 8], [736, 810, 8], [784, 790, 10],
        ]} />
      </g>
    </g>
  )
}

function Wallpaper() {
  return (
    <svg className="absolute inset-0 h-full w-full" fill="none" stroke="#172023" strokeWidth="5" strokeLinejoin="round" strokeLinecap="round" aria-hidden="true">
      <defs>
        <Tile />
      </defs>
      {[-675, 0, 675, 1350].map(x => <use key={x} href="#tile" x={x} />)}
    </svg>
  )
}
